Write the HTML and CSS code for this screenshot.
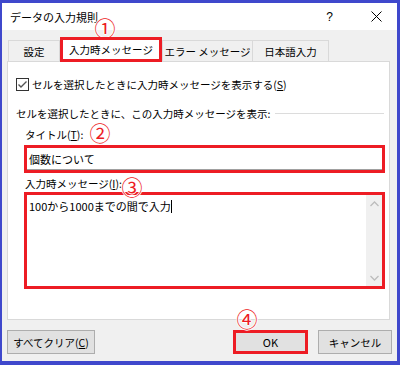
FILE: index.html
```html
<!DOCTYPE html>
<html lang="ja">
<head>
    <meta charset="UTF-8">
    <title>データの入力規則</title>
    <link rel="stylesheet" href="styles.css">
</head>
<body>
    <div class="window">
        <div class="titlebar">
            <span class="title">データの入力規則</span>
            <span class="help">?</span>
            <svg class="close" width="11" height="11" viewBox="0 0 11 11">
                <path d="M0.5 0.5 L10.5 10.5 M10.5 0.5 L0.5 10.5" stroke="#000" stroke-width="1" fill="none"/>
            </svg>
        </div>
        <div class="content">
            <div class="tabs">
                <div class="tab tab-first">設定</div>
                <div class="tab active">入力時メッセージ</div>
                <div class="tab tab-error">エラー メッセージ</div>
                <div class="tab tab-ime">日本語入力</div>
            </div>
            <div class="panel">
                <div class="check-row">
                    <svg class="checkbox" width="13" height="13" viewBox="0 0 13 13">
                        <rect x="0.5" y="0.5" width="12" height="12" fill="#fff" stroke="#333"/>
                        <path d="M2.5 6.5 L5 9 L10.5 3.5" stroke="#555" stroke-width="1.4" fill="none"/>
                    </svg>
                    <span>セルを選択したときに入力時メッセージを表示する(<u>S</u>)</span>
                </div>
                <div class="group-row">
                    <span>セルを選択したときに、この入力時メッセージを表示:</span>
                    <div class="rule"></div>
                </div>
                <div class="field-label">タイトル(<u>T</u>):</div>
                <div class="input-box">個数について</div>
                <div class="field-label field-label-msg">入力時メッセージ(<u>I</u>):</div>
                <div class="text-box">
                    <div class="msg-text">100から1000までの間で入力<span class="caret"></span></div>
                    <div class="scrollbar">
                        <svg width="9" height="6" viewBox="0 0 9 6"><path d="M0.5 5 L4.5 1 L8.5 5" stroke="#bdbdbd" stroke-width="1.3" fill="none"/></svg>
                        <svg width="9" height="6" viewBox="0 0 9 6"><path d="M0.5 1 L4.5 5 L8.5 1" stroke="#bdbdbd" stroke-width="1.3" fill="none"/></svg>
                    </div>
                </div>
            </div>
            <div class="buttons">
                <div class="btn btn-clear">すべてクリア(<u>C</u>)</div>
                <div class="spacer"></div>
                <div class="btn btn-ok">OK</div>
                <div class="btn btn-cancel">キャンセル</div>
            </div>
        </div>

        <!-- red numbered notes laid over the dialog -->
        <div class="mark mark-1">①</div>
        <div class="mark mark-2">②</div>
        <div class="mark mark-3">③</div>
        <div class="mark mark-4">④</div>
    </div>
</body>
</html>
```

FILE: styles.css
```css
body {
    margin: 0;
    font-family: "Noto Sans CJK JP", "Noto Sans", sans-serif;
    font-size: 10.5px;
    color: #000;
}
.window {
    position: relative;
    width: 400px;
    height: 365px;
    box-sizing: border-box;
    border: solid #3f48cc;
    border-width: 3px 3px 4px 2px;
    background: #f0f0f0;
}
.titlebar {
    height: 27px;
    background: #fff;
    display: flex;
    align-items: center;
    padding-left: 8px;
    font-size: 11px;
}
.title {
    flex: 1;
}
.help {
    font-family: "Liberation Sans", sans-serif;
    font-size: 12px;
    margin-right: 38px;
}
.close {
    margin-right: 15px;
}
.content {
    padding: 7px 5px 0 5px;
}
.tabs {
    display: flex;
    height: 24px;
    padding-left: 1px;
}
.tab {
    box-sizing: border-box;
    height: 21px;
    margin-top: 3px;
    border: 1px solid #d9d9d9;
    border-bottom: none;
    display: flex;
    align-items: center;
    justify-content: center;
}
.tab-first {
    width: 52px;
}
.tab.active {
    position: relative;
    z-index: 1;
    width: 102px;
    height: 25px;
    margin-top: 0;
    background: #fff;
    border: 3px solid #ed1c24;
}
.tab-error {
    width: 91px;
}
.tab-ime {
    width: 77px;
    margin-left: -1px;
}
.panel {
    box-sizing: border-box;
    height: 259px;
    margin-right: 2px;
    background: #fff;
    border: 1px solid #d9d9d9;
    padding: 0 5px 0 8px;
}
.check-row {
    display: flex;
    align-items: center;
    height: 16px;
    margin-top: 14px;
}
.checkbox {
    margin-right: 3px;
}
.group-row {
    display: flex;
    align-items: center;
    height: 16px;
    margin-top: 13px;
}
.rule {
    flex: 1;
    height: 1px;
    background: #dcdcdc;
    margin-left: 5px;
}
.field-label {
    height: 16px;
    line-height: 16px;
    margin-top: 6px;
    padding-left: 9px;
}
.field-label-msg {
    height: 14px;
    line-height: 14px;
    margin-top: 4px;
}
.input-box {
    box-sizing: border-box;
    width: 361px;
    height: 28px;
    margin: 2px 0 0 8px;
    border: 3px solid #ed1c24;
    padding-left: 2px;
    display: flex;
    align-items: center;
    font-size: 11px;
    box-shadow: inset 0 -1px 0 #a0a0a0;
}
.text-box {
    box-sizing: border-box;
    width: 361px;
    height: 97px;
    margin: 1px 0 0 8px;
    border: 3px solid #ed1c24;
    display: flex;
}
.msg-text {
    flex: 1;
    padding: 4px 0 0 2px;
    font-size: 11px;
    line-height: 14px;
}
.caret {
    display: inline-block;
    width: 1px;
    height: 13px;
    background: #000;
    vertical-align: -2px;
}
.scrollbar {
    width: 16px;
    background: #f0f0f0;
    display: flex;
    flex-direction: column;
    justify-content: space-between;
    align-items: center;
    padding: 6px 0 5px;
    box-sizing: border-box;
}
.buttons {
    display: flex;
    height: 24px;
    margin-top: 10px;
}
.btn {
    box-sizing: border-box;
    height: 24px;
    background: #e1e1e1;
    border: 1px solid #adadad;
    display: flex;
    align-items: center;
    justify-content: center;
}
.btn-clear {
    width: 88px;
}
.spacer {
    flex: 1;
}
.btn-ok {
    width: 75px;
    border: 3px solid #ed1c24;
    font-size: 11px;
}
.btn-cancel {
    width: 74px;
    margin-left: 10px;
}
.mark {
    position: absolute;
    width: 22px;
    height: 20px;
    line-height: 20px;
    text-align: center;
    font-size: 21px;
    color: #ed1c24;
    text-shadow: 1px 0 #fff, -1px 0 #fff, 0 1px #fff, 0 -1px #fff;
}
.mark-1 { left: 92px; top: 14px; }
.mark-2 { left: 87px; top: 119px; }
.mark-3 { left: 119px; top: 173px; }
.mark-4 { left: 234px; top: 305px; }
```
